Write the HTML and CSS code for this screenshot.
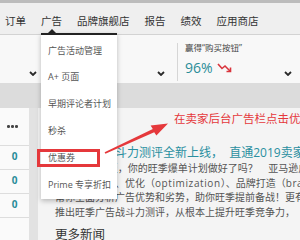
FILE: index.html
```html
<!DOCTYPE html>
<html lang="zh-CN">
<head>
<meta charset="utf-8">
<link rel="stylesheet" href="styles.css">
</head>
<body>
<div class="topbar"></div>
<nav class="nav">
  <span>订单</span><span>广告</span><span>品牌旗舰店</span><span>报告</span><span>绩效</span><span>应用商店</span>
</nav>
<section class="widgets">
  <div class="w w1">
    <svg class="chev" viewBox="0 0 8 5" width="8" height="5"><polyline points="1,1 4,4 7,1" /></svg>
  </div>
  <div class="w w2">
    <svg class="chev" viewBox="0 0 8 5" width="8" height="5"><polyline points="1,1 4,4 7,1" /></svg>
  </div>
  <div class="w3">
    <div class="metric">
      <div class="label">赢得“购买按钮”</div>
      <div class="value"><span>96%</span>
        <svg class="trend" viewBox="0 0 16 11" width="16" height="11"><polyline points="1,2 5,6.5 8,4 13.5,9.5" /><polyline points="9.5,9.5 13.5,9.5 13.5,5.5" /></svg>
      </div>
    </div>
    <svg class="chev" viewBox="0 0 8 5" width="8" height="5"><polyline points="1,1 4,4 7,1" /></svg>
  </div>
</section>
<div class="band"></div>
<section class="lower">
  <div class="leftcol">
    <div class="cell head"><span class="dot"></span><span class="dot"></span><span class="dot"></span></div>
    <div class="cell num">0</div>
    <div class="cell num">0</div>
    <div class="cell num">0</div>
    <div class="cell"></div>
  </div>
  <div class="panel">
    <div class="title">旺季广告战斗力测评全新上线，&nbsp;&nbsp;直通2019卖家峰会</div>
    <div class="line">2019旺季将至，你的旺季爆单计划做好了吗？&nbsp;&nbsp;&nbsp; 亚马逊广告专家</div>
    <div class="line">围绕广告投放、优化（<span class="latin">optimization</span>）、品牌打造（<span class="latin">branding</span>）等维度</div>
    <div class="line">帮你全面分析广告优势和劣势，助你旺季提前备战！更有专家</div>
    <div class="line">推出旺季广告战斗力测评，从根本上提升旺季竞争力，</div>
    <div class="more">更多新闻</div>
  </div>
</section>

<ul class="dropdown">
  <li>广告活动管理</li>
  <li>A+ 页面</li>
  <li>早期评论者计划</li>
  <li>秒杀</li>
  <li>优惠券</li>
  <li>Prime 专享折扣</li>
</ul>
<div class="mark"></div>
<svg class="arrow" viewBox="0 0 300 240" width="300" height="240">
  <polygon points="104.6,152.2 152.8,129.1 150.6,125.6 168,123.5 156.4,135.6 154.2,132.3 105.4,153.8" />
</svg>
<div class="note">在卖家后台广告栏点击优惠券</div>
</body>
</html>
```
FILE: styles.css
```css
* { box-sizing: border-box; }
body {
  margin: 0;
  width: 300px;
  height: 240px;
  overflow: hidden;
  position: relative;
  background: #f4f4f4;
  font-family: "Open Sans", "Noto Sans CJK SC", sans-serif;
}
.topbar { height: 3px; background: #bcbcbc; }
.nav {
  height: 32px;
  padding: 3px 0 0 5px;
  display: flex;
  align-items: center;
  gap: 15px;
  background: #efefef;
  border-bottom: 1px solid #d3d3d3;
  font-size: 10.5px;
  color: #333;
  white-space: nowrap;
}
.widgets {
  display: grid;
  grid-template-columns: 41px 136px 1fr;
  height: 48px;
  background: #f8f8f8;
}
.w {
  display: flex;
  justify-content: flex-end;
  align-items: flex-end;
  padding-bottom: 8px;
}
.w1 { padding-right: 4px; }
.w2 { padding-right: 12px; }
.chev { display: block; fill: none; stroke: #2a2a2a; stroke-width: 1.8; }
.w3 {
  margin: 8px 0 3px;
  border-left: 1px solid #d6d6d6;
  display: flex;
  justify-content: space-between;
  align-items: flex-end;
  padding: 0 8px 5px 7px;
}
.metric { align-self: flex-start; }
.label { font-size: 8.5px; line-height: 10px; color: #444; white-space: nowrap; }
.value {
  margin-top: 5px;
  display: flex;
  align-items: center;
  height: 18px;
  font-size: 14px;
  color: #2a8d99;
}
.trend { margin-left: 4px; fill: none; stroke: #d9343c; stroke-width: 1.6; }
.band { height: 25px; background: #dcdcdc; }
.lower {
  display: flex;
  gap: 9px;
  height: 132px;
  background: #e2e2e2;
}
.leftcol { width: 29px; background: #fafafa; }
.cell {
  height: 24px;
  border-top: 1px solid #dddddd;
  display: flex;
  justify-content: center;
  align-items: center;
  padding-bottom: 4px;
}
.cell.head {
  height: 37px;
  border-top: none;
  gap: 1.6px;
  padding: 0 4px 0 0;
  justify-content: center;
  align-items: center;
}
.dot { width: 2.6px; height: 2.6px; border-radius: 50%; background: #444; }
.num { font-size: 10px; font-weight: 700; color: #2a8d99; }
.panel {
  flex: 1;
  background: #f4f4f4;
  padding: 37px 0 0 17px;
  overflow: hidden;
  white-space: nowrap;
}
.title { font-size: 12px; line-height: 16px; color: #2a8fa0; }
.line { font-size: 10px; line-height: 14.7px; color: #555; }
.latin { letter-spacing: 0.6px; }
.more { margin-top: 7.5px; font-size: 12.5px; line-height: 16px; color: #333; }
.dropdown {
  position: absolute;
  left: 41px;
  top: 33px;
  width: 76px;
  margin: 0;
  padding: 2.6px 0 1px;
  list-style: none;
  background: #fff;
  border-top: 2px solid #222;
  box-shadow: 0 2px 5px rgba(0, 0, 0, 0.25);
}
.dropdown::before {
  content: "";
  position: absolute;
  left: 7px;
  top: -6px;
  border-left: 4px solid transparent;
  border-right: 4px solid transparent;
  border-bottom: 4px solid #222;
}
.dropdown li {
  height: 26.8px;
  line-height: 26.8px;
  padding-left: 7px;
  font-size: 9px;
  color: #555;
  white-space: nowrap;
}
.mark {
  position: absolute;
  left: 37px;
  top: 149px;
  width: 63px;
  height: 18px;
  border: 3px solid #e5383b;
}
.arrow { position: absolute; left: 0; top: 0; fill: #e5383b; }
.note {
  position: absolute;
  left: 174px;
  top: 111px;
  font-size: 11.5px;
  line-height: 16px;
  color: #e5383b;
  white-space: nowrap;
}
```
